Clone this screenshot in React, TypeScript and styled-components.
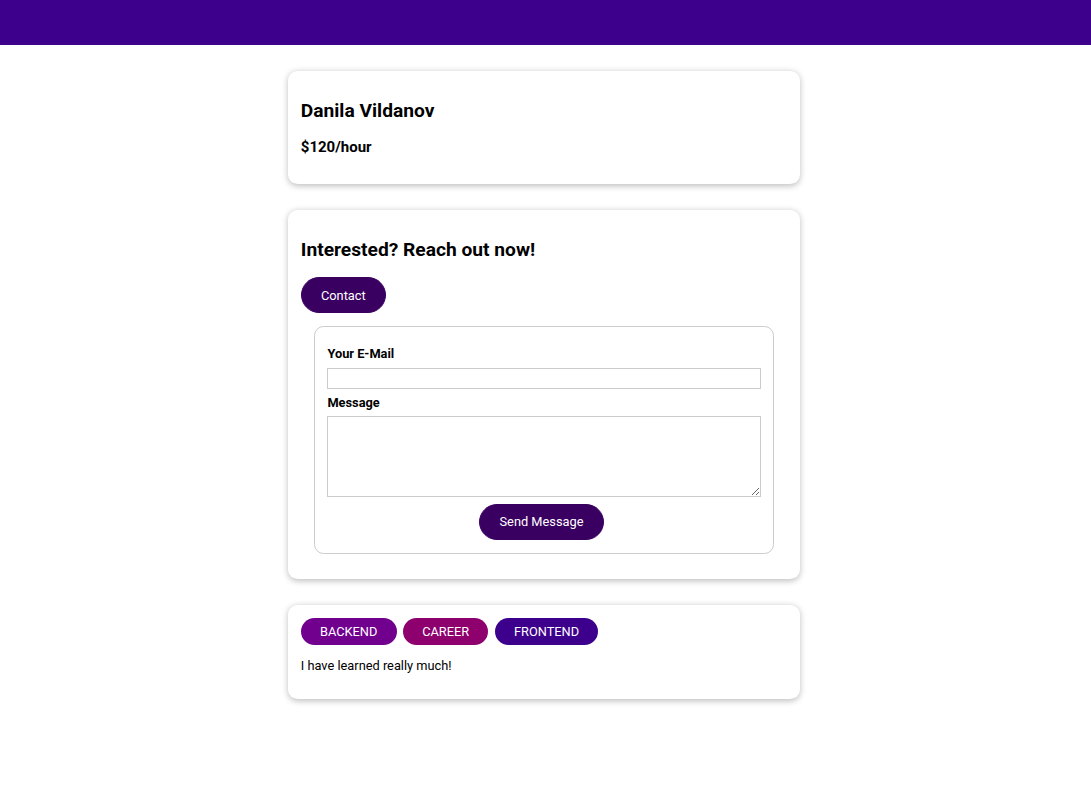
import React from "react";
import styled, { createGlobalStyle } from "styled-components";

const GlobalStyle = createGlobalStyle`
  * { box-sizing: border-box; }
  html { font-family: Roboto, "Liberation Sans", sans-serif; }
  body { margin: 0; background: #ffffff; color: #000000; }
`;

const Header = styled.header`
  width: 100%;
  height: 45px;
  background-color: #3d008d;
`;

const Main = styled.main`
  display: block;
  padding-right: 3px;
`;

const Section = styled.section`
  display: block;
`;

const Card = styled.div`
  width: 512px;
  margin: 25.6px auto;
  padding: 12.8px;
  border-radius: 9.6px;
  background: #ffffff;
  box-shadow: 0 1.6px 6.4px rgba(0, 0, 0, 0.26);
`;

const Title = styled.h2`
  font-size: 19.2px;
  font-weight: 700;
  margin: 15.9px 0;
`;

const Rate = styled.h3`
  font-size: 15px;
  font-weight: 700;
  margin: 15px 0;
`;

const Button = styled.button`
  font-family: Roboto, "Liberation Sans", sans-serif;
  font-size: 12.8px;
  font-weight: 400;
  line-height: 15px;
  padding: 9.6px 19.2px;
  background-color: #3a0061;
  border: 1px solid #3a0061;
  color: #ffffff;
  border-radius: 24px;
  cursor: pointer;
`;

const Form = styled.form`
  margin: 12.8px;
  border: 1px solid #cccccc;
  border-radius: 9.6px;
  padding: 12.8px;
`;

const Control = styled.div`
  margin: 6.4px 0;
`;

const Label = styled.label`
  display: block;
  font-weight: 700;
  font-size: 12.8px;
  line-height: 15px;
  margin-bottom: 6.4px;
`;

const Input = styled.input`
  display: block;
  width: 100%;
  font-family: Roboto, "Liberation Sans", sans-serif;
  font-size: 12.8px;
  line-height: 15px;
  border: 1px solid #cccccc;
  padding: 2.4px;
  height: 21px;
`;

const TextArea = styled.textarea`
  display: block;
  width: 100%;
  font-family: Roboto, "Liberation Sans", sans-serif;
  font-size: 12.8px;
  line-height: 15px;
  border: 1px solid #cccccc;
  padding: 2.4px;
  height: 81px;
`;

const Actions = styled.div`
  text-align: center;
  padding-right: 5px;
`;

const Badges = styled.div`
  display: flex;
  gap: 6.4px;
`;

const Badge = styled.span<{ $bg: string }>`
  display: inline-block;
  font-size: 12.8px;
  font-weight: 400;
  line-height: 15px;
  padding: 6.2px 19.2px;
  border-radius: 24px;
  background-color: ${(p) => p.$bg};
  color: #ffffff;
  text-transform: uppercase;
`;

const Description = styled.p`
  font-size: 12.8px;
  line-height: 15px;
  margin: 12.8px 0;
`;

export default function App() {
  return (
    <>
      <GlobalStyle />
      <Header />
      <Main>
        <Section>
          <Card>
            <Title>Danila Vildanov</Title>
            <Rate>$120/hour</Rate>
          </Card>
        </Section>
        <Section>
          <Card>
            <Title>Interested? Reach out now!</Title>
            <Button>Contact</Button>
            <Form onSubmit={(e) => e.preventDefault()}>
              <Control>
                <Label htmlFor="email">Your E-Mail</Label>
                <Input type="email" id="email" />
              </Control>
              <Control>
                <Label htmlFor="message">Message</Label>
                <TextArea id="message" rows={5} />
              </Control>
              <Actions>
                <Button type="submit">Send Message</Button>
              </Actions>
            </Form>
          </Card>
        </Section>
        <Section>
          <Card>
            <Badges>
              <Badge $bg="#71008f">backend</Badge>
              <Badge $bg="#8d006e">career</Badge>
              <Badge $bg="#3d008d">frontend</Badge>
            </Badges>
            <Description>I have learned really much!</Description>
          </Card>
        </Section>
      </Main>
    </>
  );
}
